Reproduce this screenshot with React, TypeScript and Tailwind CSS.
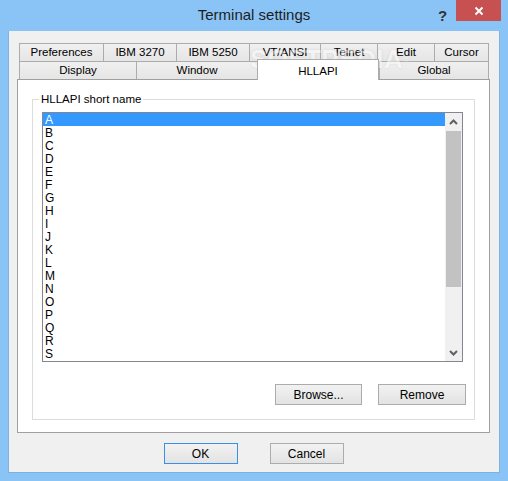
import * as React from 'react'

const row1 = [
  { name: 'Preferences', w: 'w-[84px]' },
  { name: 'IBM 3270', w: 'w-[73px]' },
  { name: 'IBM 5250', w: 'w-[73px]' },
  { name: 'VT/ANSI', w: 'w-[71px]' },
  { name: 'Telnet', w: 'w-[57px]' },
  { name: 'Edit', w: 'w-[57px]' },
  { name: 'Cursor', w: 'w-[55px]' },
]

const row2 = [
  { name: 'Display', w: 'w-[117px]' },
  { name: 'Window', w: 'w-[121px]' },
  { name: 'HLLAPI', w: 'w-[122px]', active: true },
  { name: 'Global', w: 'w-[110px]' },
]

const letters = 'ABCDEFGHIJKLMNOPQRS'.split('')

function Tab({ name, w, last, active }: { name: string; w: string; last?: boolean; active?: boolean }) {
  if (active) {
    return (
      <div
        className={`${w} relative z-10 -mt-[2px] -mb-px h-[21px] flex items-start justify-center pt-[3px] bg-white border-t border-l border-r border-[#acacac]`}
      >
        {name}
      </div>
    )
  }
  return (
    <div
      className={`${w} h-[18px] flex items-center justify-center border-t border-l border-[#acacac] bg-gradient-to-b from-[#f0f0f0] to-[#e5e5e5] ${last ? 'border-r' : ''}`}
    >
      {name}
    </div>
  )
}

function Chevron({ down }: { down?: boolean }) {
  return (
    <svg width="9" height="6" viewBox="0 0 9 6" className={down ? 'rotate-180' : ''}>
      <path d="M1 5 L4.5 1.5 L8 5" fill="none" stroke="#606060" strokeWidth="2" />
    </svg>
  )
}

function Button({ children, w, focused }: { children: React.ReactNode; w: string; focused?: boolean }) {
  return (
    <button
      className={`${w} h-[21px] flex items-center justify-center text-[12px] text-black border bg-gradient-to-b from-[#f2f2f2] to-[#e3e3e3] ${
        focused ? 'border-[#3c8fe6]' : 'border-[#acacac]'
      }`}
    >
      {children}
    </button>
  )
}

export default function App() {
  return (
    <div
      className="w-[508px] h-[481px] bg-[#8ac3f5] flex flex-col text-[11.5px] text-black"
      style={{ fontFamily: '"Liberation Sans", Arial, sans-serif' }}
    >
      {/* title bar */}
      <div className="relative h-[31px] flex items-center justify-center">
        <span className="text-[15px] text-[#1e1e1e] -mt-[1px]">Terminal settings</span>
        <span className="absolute left-[438px] top-[5px] text-[15px] font-bold text-[#333]">?</span>
        <div className="absolute left-[456px] top-0 w-[45px] h-[21px] bg-[#c75050] flex items-center justify-center">
          <svg width="10" height="10" viewBox="0 0 10 10">
            <path d="M1.5 1.5 L8.5 8.5 M8.5 1.5 L1.5 8.5" stroke="white" strokeWidth="2" />
          </svg>
        </div>
      </div>

      {/* client area */}
      <div className="relative mx-[8px] mb-[8px] flex-1 bg-[#f0f0f0] border-l border-b border-r border-[#7fb2e2] flex flex-col pl-[8px] pr-[9px] pt-[12px]">
        <div className="ml-[2px] mr-px flex">
          {row1.map((t, i) => (
            <Tab key={t.name} name={t.name} w={t.w} last={i === row1.length - 1} />
          ))}
        </div>
        <div className="ml-[2px] mr-px flex items-start h-[18px]">
          {row2.map((t, i) => (
            <Tab key={t.name} name={t.name} w={t.w} active={t.active} last={i === row2.length - 1} />
          ))}
        </div>

        {/* panel */}
        <div className="h-[354px] bg-white border border-[#a0a0a0] px-[14px] pt-[19px]">
          <div className="relative h-[321px] border border-[#dcdcdc] flex flex-col">
            <span className="absolute left-[6px] -top-[8px] px-[2px] bg-white leading-[14px]">HLLAPI short name</span>
            <div className="ml-[9px] mr-[11px] mt-[12px] h-[250px] border border-[#828790] flex text-[12px]">
              <div className="flex-1 flex flex-col leading-[13px]">
                {letters.map((l, i) => (
                  <div
                    key={l}
                    className={`h-[13px] pl-[2px] pt-px ${i === 0 ? 'bg-[#3399ff] text-white' : 'text-black'}`}
                  >
                    {l}
                  </div>
                ))}
              </div>
              <div className="w-[17px] bg-[#f0f0f0] flex flex-col">
                <div className="h-[18px] flex items-center justify-center">
                  <Chevron />
                </div>
                <div className="h-[156px] bg-[#c2c2c2] mx-px" />
                <div className="flex-1" />
                <div className="h-[17px] flex items-center justify-center">
                  <Chevron down />
                </div>
              </div>
            </div>
            <div className="flex justify-end gap-[16px] mt-[22px] mr-[8px]">
              <Button w="w-[87px]">Browse...</Button>
              <Button w="w-[88px]">Remove</Button>
            </div>
          </div>
        </div>

        {/* dialog buttons */}
        <div className="flex justify-center gap-[32px] mt-[10px]">
          <Button w="w-[74px]" focused>
            OK
          </Button>
          <Button w="w-[74px]">Cancel</Button>
        </div>

        {/* watermark */}
        <span className="absolute left-[241px] top-[9px] text-[26px] font-bold tracking-[0.5px] text-white opacity-45 [text-shadow:0_0_2px_rgba(0,0,0,0.25)] pointer-events-none">
          SOFTPEDIA<sup className="text-[9px] font-normal">®</sup>
        </span>
      </div>
    </div>
  )
}
